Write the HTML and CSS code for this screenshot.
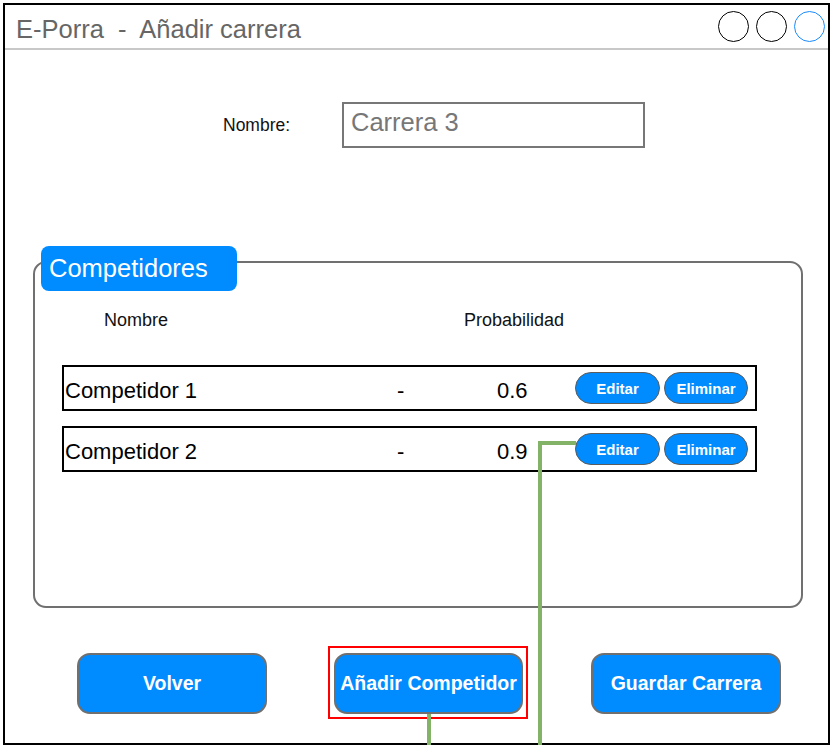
FILE: index.html
```html
<!DOCTYPE html>
<html lang="es">
<head>
<meta charset="utf-8">
<title>E-Porra - Añadir carrera</title>
<link rel="stylesheet" href="styles.css">
</head>
<body>
<div class="window">
  <header class="titlebar">
    <div class="title">E-Porra&nbsp; -&nbsp; Añadir carrera</div>
    <div class="dots">
      <span class="dot"></span>
      <span class="dot"></span>
      <span class="dot dot-blue"></span>
    </div>
  </header>

  <div class="name-row">
    <span class="name-label">Nombre:</span>
    <div class="name-input">Carrera 3</div>
  </div>

  <section class="competitors">
    <div class="tab">Competidores</div>
    <div class="col-heads">
      <span class="col-name">Nombre</span>
      <span class="col-prob">Probabilidad</span>
    </div>
    <div class="rows">
      <div class="row">
        <span class="cell cell-name">Competidor 1</span>
        <span class="cell cell-dash">-</span>
        <span class="cell cell-prob">0.6</span>
        <button class="pill pill-edit">Editar</button>
        <button class="pill pill-del">Eliminar</button>
      </div>
      <div class="row">
        <span class="cell cell-name">Competidor 2</span>
        <span class="cell cell-dash">-</span>
        <span class="cell cell-prob">0.9</span>
        <button class="pill pill-edit">Editar</button>
        <button class="pill pill-del">Eliminar</button>
      </div>
    </div>
  </section>

  <div class="actions">
    <button class="big-btn btn-back">Volver</button>
    <div class="highlight">
      <button class="big-btn btn-add">Añadir Competidor</button>
    </div>
    <button class="big-btn btn-save">Guardar Carrera</button>
  </div>

  <div class="link link-v1"></div>
  <div class="link link-h1"></div>
  <div class="link link-v2"></div>
</div>
</body>
</html>
```

FILE: styles.css
```css
* { box-sizing: border-box; }

html, body {
  margin: 0;
  padding: 0;
  background: #ffffff;
}

body {
  font-family: "Liberation Sans", Arial, Helvetica, sans-serif;
  color: #000;
}

.window {
  position: relative;
  margin: 3px 0 0 3px;
  width: 827px;
  height: 742px;
  border: 2px solid #000;
  background: #fff;
}

/* header */
.titlebar {
  display: flex;
  align-items: center;
  height: 45px;
  border-bottom: 2px solid #c8c8c8;
  padding: 0 3px 0 11px;
}

.title {
  font-size: 25.5px;
  color: #666;
  padding-top: 6px;
  white-space: nowrap;
}

.dots {
  margin-left: auto;
  display: flex;
  gap: 7px;
}

.dot {
  width: 31px;
  height: 31px;
  border-radius: 50%;
  border: 1.6px solid #000;
}

.dot-blue { border-color: #1a8cff; }

/* name row */
.name-row {
  display: flex;
  align-items: center;
  margin-top: 52px;
  padding-left: 218px;
}

.name-label {
  width: 119px;
  font-size: 17.5px;
  color: #111;
}

.name-input {
  width: 303px;
  height: 46px;
  border: 2px solid #777;
  padding: 4px 0 0 7px;
  font-size: 25.5px;
  color: #777;
}

/* competitors box */
.competitors {
  position: relative;
  margin: 113px 0 0 28px;
  width: 770px;
  height: 347px;
  border: 2px solid #707070;
  border-radius: 13px;
}

.tab {
  position: absolute;
  left: 6px;
  top: -17px;
  width: 196px;
  height: 45px;
  display: flex;
  align-items: center;
  padding-left: 8px;
  background: #008cff;
  border-radius: 8px;
  color: #fff;
  font-size: 25.5px;
}

.col-heads {
  display: flex;
  padding: 47px 0 0 69px;
  font-size: 18px;
  color: #111;
}

.col-name { width: 360px; }

.rows {
  margin: 34px 0 0 27px;
  width: 695px;
  display: flex;
  flex-direction: column;
  gap: 15px;
}

.row {
  display: flex;
  align-items: center;
  height: 46px;
  border: 2px solid #000;
  padding-left: 1px;
}

.cell {
  font-size: 22px;
  padding-top: 5px;
}

.cell-name { width: 332px; }
.cell-dash { width: 100px; }
.cell-prob { width: 78px; }

.pill {
  height: 32px;
  border: 1.5px solid #5c5c5c;
  border-radius: 16px;
  background: #008cff;
  color: #fff;
  font-family: inherit;
  font-weight: bold;
  font-size: 15px;
  padding: 0;
}

.pill-edit { width: 85px; margin-right: 4px; }
.pill-del { width: 84px; }

/* bottom actions */
.actions {
  display: flex;
  align-items: flex-start;
  margin-top: 38px;
  padding-left: 72px;
}

.big-btn {
  height: 61px;
  width: 190px;
  border: 2px solid #707070;
  border-radius: 13px;
  background: #008cff;
  color: #fff;
  font-family: inherit;
  font-weight: bold;
  font-size: 19.5px;
  padding: 0;
}

.btn-back { margin-top: 7px; }

.highlight {
  margin-left: 61px;
  border: 2px solid #ff0000;
  padding: 5px 3px 3px 4px;
}

.btn-add { width: 189px; }

.btn-save {
  margin-top: 7px;
  margin-left: 63px;
}

/* connector lines */
.link {
  position: absolute;
  background: #82b366;
}

.link-v1 {
  left: 533px;
  top: 436px;
  width: 4px;
  height: 310px;
}

.link-h1 {
  left: 533px;
  top: 436px;
  width: 38px;
  height: 4px;
}

.link-v2 {
  left: 422px;
  top: 709px;
  width: 4px;
  height: 40px;
}
```
